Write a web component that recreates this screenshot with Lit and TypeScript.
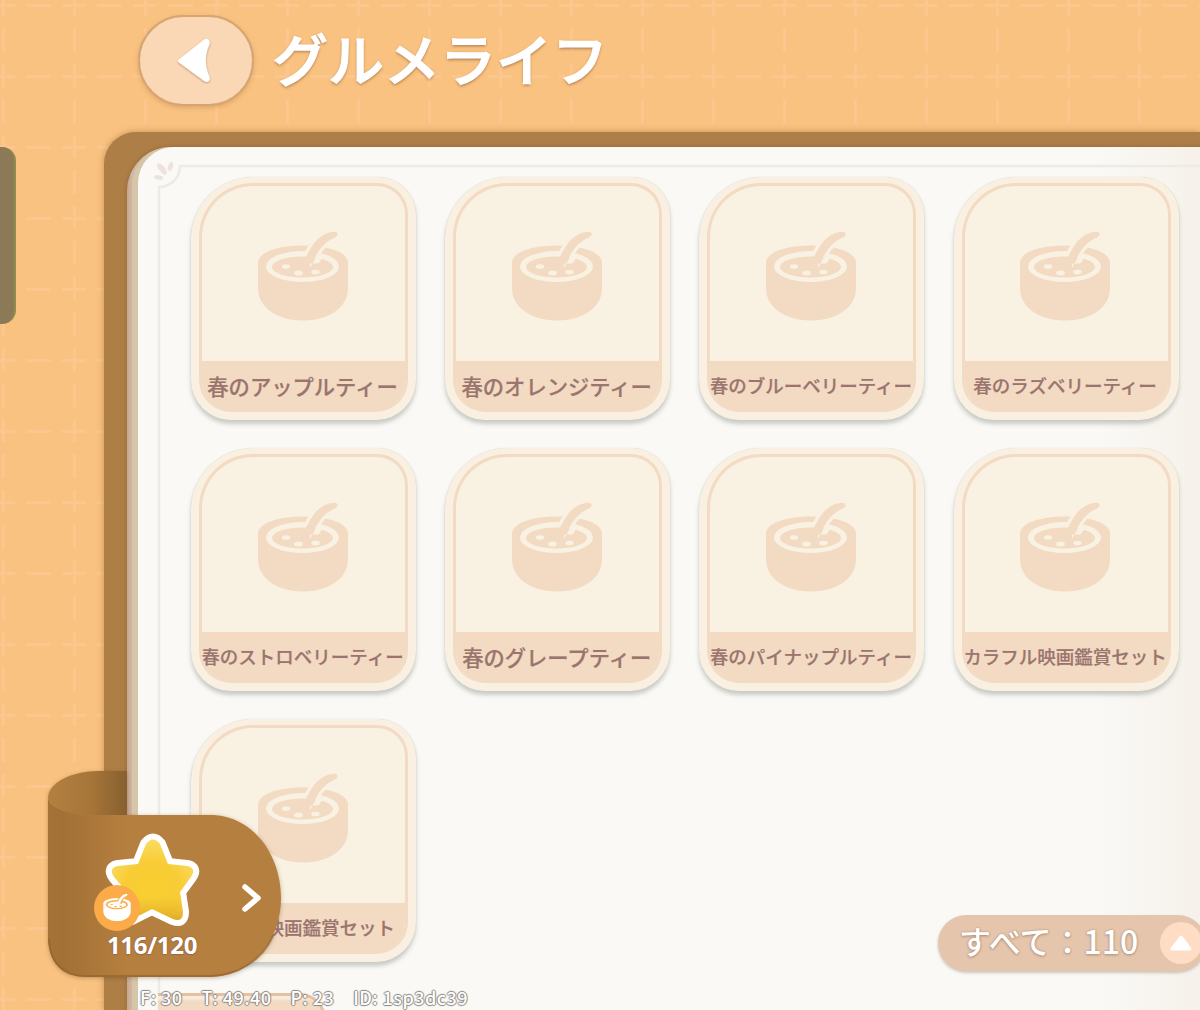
import { LitElement, html, css, svg } from 'lit';
import { customElement, property } from 'lit/decorators.js';

const FONT = css`'Noto Sans CJK JP', 'Noto Sans', sans-serif`;

const DISHES = [
  '春のアップルティー',
  '春のオレンジティー',
  '春のブルーベリーティー',
  '春のラズベリーティー',
  '春のストロベリーティー',
  '春のグレープティー',
  '春のパイナップルティー',
  'カラフル映画鑑賞セット',
  '素敵な映画鑑賞セット'
];

@customElement('bowl-icon')
export class BowlIcon extends LitElement {
  // --bowl is the ink, --hole the colour showing through it
  static styles = css`
    :host {
      display: block;
    }
    svg {
      display: block;
      width: 100%;
      height: 100%;
    }
    .ink {
      fill: var(--bowl, #f3dac3);
    }
    .hole {
      fill: var(--hole, #f9f1e1);
    }
    .spoon-gap {
      fill: var(--hole, #f9f1e1);
      stroke: var(--hole, #f9f1e1);
      stroke-width: 7;
      stroke-linejoin: round;
    }
  `;

  render() {
    return html`
      <svg viewBox="17 11 92 90">
        <path class="ink" d="M18 43C18 32 38 25.5 63 25.5S108 32 108 43V68C108 88 88 100.5 63 100.5S18 88 18 68Z" />
        <ellipse class="hole" cx="62.5" cy="46.5" rx="36.5" ry="15.5" />
        <path class="spoon-gap" d="M64 42C67 34 71 26 78 20C83 15 90 11.5 95 12.5C98 13.5 98 15.500 95 17.500C84 22 79 29 74 38Z" />
        <ellipse class="ink" cx="62.5" cy="47" rx="30.5" ry="10.5" />
        <path class="hole" d="M70 48L76 37L82 38L79 43Q76 44 70 43Z" />
        <path class="ink" d="M60 45C65 42 70 25 79 18C85 13 92 11 96 12C98.500 13.500 98 15.500 95 17.500C84 22 79 30 74 39Q72 43 68 46Z" />
        <ellipse class="hole" cx="46" cy="46.500" rx="4.200" ry="2.300" />
        <ellipse class="hole" cx="58.500" cy="53" rx="4.400" ry="2.500" />
        <ellipse class="hole" cx="75.500" cy="52" rx="4.200" ry="2.300" />
      </svg>
    `;
  }
}

@customElement('dish-card')
export class DishCard extends LitElement {
  @property() name = '';

  static styles = css`
    :host {
      display: block;
      box-sizing: border-box;
      padding: 6px 8px 8px 8px;
      background: #faf0e1;
      border-radius: 62px 38px 40px 40px;
      box-shadow: 0 0 1px #c9cec6, 0 4px 4px rgba(110, 122, 112, 0.36);
    }
    .inner {
      box-sizing: border-box;
      height: 100%;
      display: flex;
      flex-direction: column;
      overflow: hidden;
      background: #f9f1e1;
      border: 3px solid #f3dac3;
      border-bottom: none;
      border-radius: 54px 31px 32px 32px;
    }
    .picture {
      flex: 1;
      display: flex;
      justify-content: center;
      align-items: flex-start;
      padding: 45px 2px 0 0;
    }
    bowl-icon {
      width: 92px;
      height: 90px;
    }
    .label {
      height: 51px;
      display: flex;
      justify-content: center;
      margin: 0 -3px;
      padding-right: 2px;
      background: #f3dac3;
      color: #9a756e;
      font: 500 18.5px/49px ${FONT};
      white-space: nowrap;
      -webkit-text-stroke: 0.2px #9a756e;
    }
    .label.short {
      font-size: 21.3px;
    }
  `;

  render() {
    return html`
      <div class="inner">
        <div class="picture"><bowl-icon></bowl-icon></div>
        <div class="label ${this.name.length < 10 ? 'short' : ''}">${this.name}</div>
      </div>
    `;
  }
}

@customElement('star-ribbon')
export class StarRibbon extends LitElement {
  @property() count = '';

  static styles = css`
    :host {
      display: block;
      width: 236px;
      height: 210px;
    }
    .shape {
      position: absolute;
      left: 0;
      top: 0;
      filter: drop-shadow(0 1px 2px rgba(90, 60, 20, 0.35));
    }
    .content {
      position: relative;
      display: flex;
      align-items: center;
      padding: 60px 0 0 46px;
    }
    .score {
      width: 116px;
      display: flex;
      flex-direction: column;
      align-items: center;
    }
    .star {
      display: block;
      width: 98px;
      height: 98px;
    }
    .badge {
      position: absolute;
      left: 46px;
      top: 114px;
      width: 46px;
      height: 46px;
      box-sizing: border-box;
      padding: 8px 9px 9px;
      border-radius: 50%;
      background: #fbac49;
      --bowl: #fff;
      --hole: #fbac49;
    }
    .count {
      margin-top: 0;
      color: #fff;
      font: 700 24px/32px 'Open Sans', sans-serif;
      letter-spacing: -0.3px;
      white-space: nowrap;
      text-shadow: 0 0 2px #8d5c48, 0 1px 1px #a06d45;
    }
    .arrow {
      margin: 2px 0 0 29px;
    }
  `;

  render() {
    return html`
      <svg class="shape" width="236" height="210" viewBox="0 0 236 210">
        <defs>
          <linearGradient id="front" x1="0" x2="1" y1="0" y2="0">
            <stop offset="0" stop-color="#a67336" />
            <stop offset="0.06" stop-color="#a27035" />
            <stop offset="0.34" stop-color="#b57f3f" />
          </linearGradient>
          <linearGradient id="back" x1="0" x2="1" y1="0" y2="0">
            <stop offset="0" stop-color="#b38041" />
            <stop offset="0.55" stop-color="#a67538" />
            <stop offset="1" stop-color="#87602f" />
          </linearGradient>
        </defs>
        <path fill="url(#front)" d="M0 27C2 37 20 44 48 44H162C205 44 233 84 233 127C233 171 202 206 161 206H38C13 206 0 190 0 166Z" />
        <path fill="none" stroke="#93642e" stroke-width="2" opacity=".7" d="M1 168C2 191 14 205 38 205H161C190 205 214 189 225 165" />
        <path fill="url(#back)" d="M79 0H52C21 0 0 13 0 27C2 37 20 44 43 44H79Z" />
      </svg>
      <div class="content">
        <div class="score">
          <svg class="star" viewBox="0 0 98 98">
            <defs>
              <radialGradient id="gold" cx=".5" cy=".62" r=".62">
                <stop offset="0" stop-color="#f8cf31" />
                <stop offset=".55" stop-color="#f8cc35" />
                <stop offset="1" stop-color="#fadb62" />
              </radialGradient>
              <linearGradient id="shade" x1="0" x2="0" y1="0" y2="1">
                <stop offset=".7" stop-color="#eab92a" stop-opacity="0" />
                <stop offset="1" stop-color="#d9a01e" stop-opacity=".8" />
              </linearGradient>
            </defs>
            ${['#fff', 'url(#gold)', 'url(#shade)'].map(fill => svg`
              <path
                fill=${fill}
                stroke=${fill === '#fff' ? '#fff' : 'none'}
                stroke-width="12"
                stroke-linejoin="round"
                d="M43 13Q50 4 57 13L65 33L84 35Q94 37 88 46L77 61L80 81Q80 92 70 88L49 78L29 88Q19 91 20 80L24 61L11 46Q5 37 15 35L35 33Z"
              />
            `)}
          </svg>
          <span class="count">${this.count}</span>
        </div>
        <svg class="arrow" width="24" height="34" viewBox="0 0 24 34">
          <path d="M6 7L19 18L6 29" fill="none" stroke="#fff" stroke-width="5.500" stroke-linecap="round" stroke-linejoin="round" />
        </svg>
      </div>
      <bowl-icon class="badge"></bowl-icon>
    `;
  }
}

@customElement('app-root')
export class AppRoot extends LitElement {
  static styles = css`
    :host {
      position: relative;
      display: flex;
      flex-direction: column;
      width: 1200px;
      height: 1010px;
      overflow: hidden;
      background: #f9c281;
      font-family: ${FONT};
    }
    .backdrop {
      position: absolute;
      inset: 0;
    }
    header {
      position: relative;
      box-sizing: border-box;
      flex: none;
      height: 132px;
      display: flex;
      align-items: flex-start;
      gap: 18px;
      padding: 15px 0 0 138px;
    }
    .back {
      box-sizing: border-box;
      width: 116px;
      height: 91px;
      padding: 0;
      border: 2px solid #d7a573;
      border-radius: 46px;
      background: #fad7b5;
      box-shadow: 0 2px 4px rgba(170, 110, 50, 0.3);
    }
    .back svg {
      display: block;
      margin: 1px 0 0 37px;
    }
    .back path {
      filter: drop-shadow(0 1px 1px #c49a74);
    }
    h1 {
      margin: 0;
      color: #fff;
      font: 500 56px/83px ${FONT};
      white-space: nowrap;
      -webkit-text-stroke: 1.2px #fff;
      text-shadow: 0 2px 3px rgba(150, 100, 60, 0.65), 0 0 2px rgba(150, 100, 60, 0.5);
    }
    .book {
      position: relative;
      flex: 1;
      min-height: 0;
      display: flex;
      margin-left: 104px;
      padding: 15px 0 0 23px;
      background: #ad7e46;
      border-radius: 32px 0 0 0;
      box-shadow: 0 0 6px rgba(160, 100, 40, 0.55);
    }
    .sheet {
      flex: 1;
      display: flex;
      padding-left: 5px;
      background: linear-gradient(90deg, #c7a992, #d1b6a3 5px);
      border-radius: 44px 0 0 0;
      box-shadow: 0 0 4px rgba(110, 70, 30, 0.4);
    }
    .sheet .sheet {
      padding-left: 6px;
      background: #d5c6a9;
      border-radius: 38px 0 0 0;
      box-shadow: none;
    }
    .page {
      position: relative;
      flex: 1;
      padding: 30px 0 0 53px;
      background: linear-gradient(90deg, #faf9f6 960px, #f6f1ea 1062px);
      border-radius: 36px 0 0 0;
    }
    .trim {
      position: absolute;
      left: 14px;
      top: 12px;
    }
    .dishes {
      position: relative;
      display: grid;
      grid-template-columns: repeat(4, 225px);
      grid-auto-rows: 243px;
      gap: 28px 29.2px;
    }
    .tab {
      position: absolute;
      left: -20px;
      top: 147px;
      width: 34px;
      height: 177px;
      background: #8c7956;
      border-right: 2px solid #8f8c4f;
      border-radius: 14px;
    }
    star-ribbon {
      position: absolute;
      left: 48px;
      top: 771px;
    }
    .next {
      position: absolute;
      left: 158px;
      top: 993px;
      width: 168px;
      height: 60px;
      box-sizing: border-box;
      border: solid #e3c2a3;
      border-width: 3px 3px 0 0;
      border-radius: 0 26px 0 0;
      background: linear-gradient(#f9eadb 3px, #f3dac3 5px);
    }
    .filter {
      position: absolute;
      left: 938px;
      top: 915px;
      width: 268px;
      height: 56px;
      box-sizing: border-box;
      display: flex;
      align-items: center;
      justify-content: space-between;
      padding: 0 4px 0 21px;
      border-radius: 28px;
      background: #e5c6ad;
      box-shadow: 0 2px 3px rgba(130, 100, 80, 0.35);
      color: #fff;
      font-size: 32px;
      font-weight: 500;
      line-height: 48px;
      white-space: nowrap;
      text-shadow: 0 1px 3px #b28f76, 0 0 2px #b28f76;
    }
    .filter span {
      height: 54px;
    }
    .filter svg {
      flex: none;
    }
    .status {
      position: absolute;
      left: 140px;
      top: 985px;
      display: flex;
      gap: 19px;
      color: #fff;
      font: 500 18px/24px ${FONT};
      letter-spacing: 0.45px;
      white-space: pre;
      text-shadow: 1px 0 1px #8d8985, -1px 0 1px #8d8985, 0 1px 1px #8d8985, 0 -1px 1px #8d8985;
    }
  `;

  render() {
    return html`
      <svg class="backdrop" width="1200" height="1010">
        <defs>
          <pattern id="stitch" x="2" y="4" width="71" height="71" patternUnits="userSpaceOnUse">
            <path
              d="M0 1.500H13M24 1.500H49M60 1.500H71M1.500 0V12M1.500 24V48M1.500 60V71"
              stroke="#fbc78f"
              stroke-width="3"
              fill="none"
            />
          </pattern>
        </defs>
        <rect width="1200" height="1010" fill="url(#stitch)" />
      </svg>
      <header>
        <button class="back" aria-label="戻る">
          <svg width="36" height="46" viewBox="0 0 32 46" preserveAspectRatio="none">
            <path
              d="M1.500 21.500L24 1.500C27 -0.500 30 2 29 6C24.500 18 24.500 27 29 39C30 43 27 45.500 24 43L1.500 24.500Q0 23 1.500 21.500Z"
              fill="#fff"
            />
          </svg>
        </button>
        <h1>グルメライフ</h1>
      </header>
      <main class="book">
        <div class="sheet">
          <div class="sheet">
            <div class="page">
              <svg class="trim" width="1048" height="860" fill="none">
                <path d="M1048 7H28C28 19 19 28 7 28V860" stroke="#edebe6" stroke-width="2.500" />
                <g fill="#eee2dc">
                  <ellipse cx="10" cy="10" rx="3" ry="7" transform="rotate(-38 10 10)" />
                  <ellipse cx="18.500" cy="7.500" rx="2.300" ry="4.500" transform="rotate(18 18.500 7.500)" />
                  <ellipse cx="6.500" cy="18.500" rx="4.500" ry="2.300" transform="rotate(8 6.500 18.500)" />
                </g>
              </svg>
              <div class="dishes">
                ${DISHES.map(name => html`<dish-card .name=${name}></dish-card>`)}
              </div>
            </div>
          </div>
        </div>
      </main>
      <div class="tab"></div>
      <div class="next"></div>
      <star-ribbon count="116/120"></star-ribbon>
      <div class="filter">
        <span>すべて：110</span>
        <svg width="42" height="42" viewBox="0 0 42 42">
          <circle cx="21" cy="21" r="21" fill="#ffddc5" />
          <path d="M21 15L30 27H12Z" fill="#fff" stroke="#fff" stroke-width="3" stroke-linejoin="round" />
        </svg>
      </div>
      <div class="status"><span>F: 30</span><span>T: 49.40</span><span>P: 23</span><span>ID: 1sp3dc39</span></div>
    `;
  }
}
